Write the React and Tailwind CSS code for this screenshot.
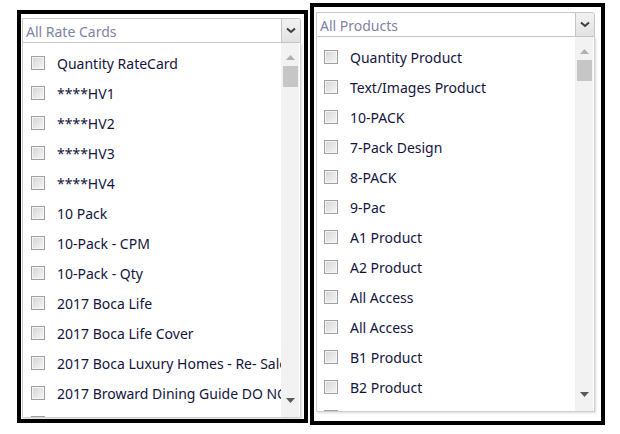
import React from "react";

const left = [
  "Quantity RateCard",
  "****HV1",
  "****HV2",
  "****HV3",
  "****HV4",
  "10 Pack",
  "10-Pack - CPM",
  "10-Pack - Qty",
  "2017 Boca Life",
  "2017 Boca Life Cover",
  "2017 Boca Luxury Homes - Re- Sale",
  "2017 Broward Dining Guide DO NOT USE",
  "2017 Broward Dining Guide",
];

const right = [
  "Quantity Product",
  "Text/Images Product",
  "10-PACK",
  "7-Pack Design",
  "8-PACK",
  "9-Pac",
  "A1 Product",
  "A2 Product",
  "All Access",
  "All Access",
  "B1 Product",
  "B2 Product",
  "B3 Product",
];

function Chevron() {
  return (
    <svg width="10" height="7" viewBox="0 0 10 7">
      <path d="M1 1.5 L5 5 L9 1.5" fill="none" stroke="#3c3c3c" strokeWidth="2" />
    </svg>
  );
}

function Check() {
  return (
    <span className="block w-[14px] h-[14px] shrink-0 border border-[#a0a0a0] bg-gradient-to-br from-[#d4d4d4] to-[#f7f7f7] shadow-[inset_0_0_0_1px_#f4f4f4]" />
  );
}

function Widget({ placeholder, items, cbOffset }) {
  return (
    <div className="w-[279px] flex flex-col">
      <div className="h-[25px] flex border border-[#c6c6c6] rounded-tr-[3px] bg-white">
        <div className="flex-1 flex items-center pl-[3px] pt-[2px] text-[14px] text-[#8282a4] leading-none">
          {placeholder}
        </div>
        <div className="w-[19px] flex items-center justify-center border-l border-[#c6c6c6] bg-gradient-to-b from-[#f2f2f2] to-[#e2e2e2] rounded-tr-[3px]">
          <Chevron />
        </div>
      </div>
      <div className="h-[375px] flex border-x border-b border-[#cfcfcf] shadow-[1px_1px_2px_rgba(0,0,0,0.15)] bg-white overflow-hidden">
        <div className="flex-1 min-w-0 pt-[5px] overflow-hidden">
          {items.map((t, i) => (
            <div key={i} className={`h-[30px] flex items-center ${cbOffset}`}>
              <Check />
              <span className="ml-[12px] whitespace-nowrap text-[14px] text-[#141440]">{t}</span>
            </div>
          ))}
        </div>
        <div className="w-[18px] shrink-0 bg-[#f2f2f2] flex flex-col items-center mr-[1px]">
          <div className="h-[18px] flex items-center justify-center mt-[5px]">
            <svg width="9" height="5" viewBox="0 0 9 5">
              <path d="M0 5 L4.5 0 L9 5 Z" fill="#b0b0b0" />
            </svg>
          </div>
          <div className="w-[15px] h-[21px] bg-[#c6c6c6]" />
          <div className="flex-1" />
          <div className="h-[18px] flex items-center justify-center mb-[8px]">
            <svg width="9" height="5" viewBox="0 0 9 5">
              <path d="M0 0 L4.5 5 L9 0 Z" fill="#5a5a5a" />
            </svg>
          </div>
        </div>
      </div>
    </div>
  );
}

export default function App() {
  return (
    <div
      className="w-[620px] h-[434px] bg-white flex items-start overflow-hidden"
      style={{ fontFamily: '"Noto Sans", "Open Sans", sans-serif' }}
    >
      <div className="ml-[17px] mt-[10px] w-[291px] h-[413px] border-4 border-black overflow-hidden">
        <div className="ml-[1px] mt-[4px]">
          <Widget placeholder="All Rate Cards" items={left} cbOffset="pl-[8px]" />
        </div>
      </div>
      <div className="ml-[2px] mt-[3px] w-[295px] h-[422px] border-4 border-black overflow-hidden">
        <div className="ml-[2px] mt-[5px]">
          <Widget placeholder="All Products" items={right} cbOffset="pl-[7px]" />
        </div>
      </div>
    </div>
  );
}
